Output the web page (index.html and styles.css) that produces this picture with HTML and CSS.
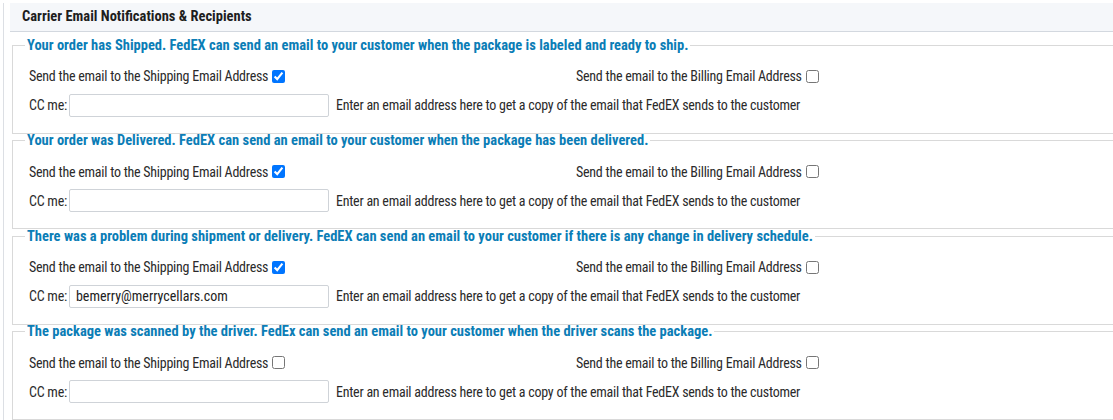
FILE: index.html
```html
<!DOCTYPE html>
<html>
<head>
<meta charset="utf-8">
<link rel="stylesheet" href="styles.css">
</head>
<body>
<div class="panel">
  <div class="panel-head">Carrier Email Notifications &amp; Recipients</div>

  <fieldset class="group">
    <legend>Your order has Shipped. FedEX can send an email to your customer when the package is labeled and ready to ship.</legend>
    <div class="row">
      <label class="col">Send the email to the Shipping Email Address <input type="checkbox" checked></label>
      <label class="col">Send the email to the Billing Email Address <input type="checkbox"></label>
    </div>
    <div class="row cc">
      <label class="cc-label">CC me:</label>
      <input class="cc-input" type="text" value="">
      <span class="hint">Enter an email address here to get a copy of the email that FedEX sends to the customer</span>
    </div>
  </fieldset>

  <fieldset class="group">
    <legend>Your order was Delivered. FedEX can send an email to your customer when the package has been delivered.</legend>
    <div class="row">
      <label class="col">Send the email to the Shipping Email Address <input type="checkbox" checked></label>
      <label class="col">Send the email to the Billing Email Address <input type="checkbox"></label>
    </div>
    <div class="row cc">
      <label class="cc-label">CC me:</label>
      <input class="cc-input" type="text" value="">
      <span class="hint">Enter an email address here to get a copy of the email that FedEX sends to the customer</span>
    </div>
  </fieldset>

  <fieldset class="group">
    <legend>There was a problem during shipment or delivery. FedEX can send an email to your customer if there is any change in delivery schedule.</legend>
    <div class="row">
      <label class="col">Send the email to the Shipping Email Address <input type="checkbox" checked></label>
      <label class="col">Send the email to the Billing Email Address <input type="checkbox"></label>
    </div>
    <div class="row cc">
      <label class="cc-label">CC me:</label>
      <input class="cc-input" type="text" value="bemerry@merrycellars.com">
      <span class="hint">Enter an email address here to get a copy of the email that FedEX sends to the customer</span>
    </div>
  </fieldset>

  <fieldset class="group">
    <legend>The package was scanned by the driver. FedEx can send an email to your customer when the driver scans the package.</legend>
    <div class="row">
      <label class="col">Send the email to the Shipping Email Address <input type="checkbox"></label>
      <label class="col">Send the email to the Billing Email Address <input type="checkbox"></label>
    </div>
    <div class="row cc">
      <label class="cc-label">CC me:</label>
      <input class="cc-input" type="text" value="">
      <span class="hint">Enter an email address here to get a copy of the email that FedEX sends to the customer</span>
    </div>
  </fieldset>
</div>
</body>
</html>
```

FILE: styles.css
```css
html, body {
  margin: 0;
  padding: 0;
  background: #fff;
}
body {
  font-family: "Liberation Sans Narrow", "Roboto Condensed", "Liberation Sans", sans-serif;
  font-stretch: condensed;
  font-size: 14px;
  letter-spacing: -0.25px;
  color: #2b2b2b;
}
.panel {
  margin: 3px 0 0 3px;
  border-left: 1px solid #dcdfe4;
  padding-left: 6px;
}
.panel-head {
  background: #f5f7fa;
  border-bottom: 1px solid #d3d8df;
  height: 28px;
  line-height: 27px;
  padding-left: 12px;
  font-weight: bold;
  font-size: 14.5px;
  letter-spacing: 0;
  color: #1e1e1e;
}
.group {
  margin: -0.5px 7px 0 2px;
  border: 1px solid #d9d9d9;
  padding: 12px 16px 16px 16px;
}
.panel-head + .group {
  margin-top: 5.5px;
}
.group legend {
  margin-left: -4px;
  padding: 0 2px;
  font-weight: bold;
  font-size: 14.5px;
  letter-spacing: 0;
  color: #0b7db6;
  line-height: 15px;
}
.row {
  display: flex;
  align-items: center;
  height: 23px;
}
.row.cc {
  margin-top: 6px;
}
.col {
  width: 547px;
  display: flex;
  align-items: center;
}
.col input {
  margin: 0 0 0 4px;
  width: 13px;
  height: 13px;
}
.cc-label {
  margin-right: 2px;
}
.cc-input {
  box-sizing: border-box;
  width: 260px;
  height: 23px;
  border: 1px solid #cfd3d8;
  border-radius: 2px;
  padding: 0 6px;
  font: inherit;
  color: #222;
  margin: 0 7px 0 0;
}
```
